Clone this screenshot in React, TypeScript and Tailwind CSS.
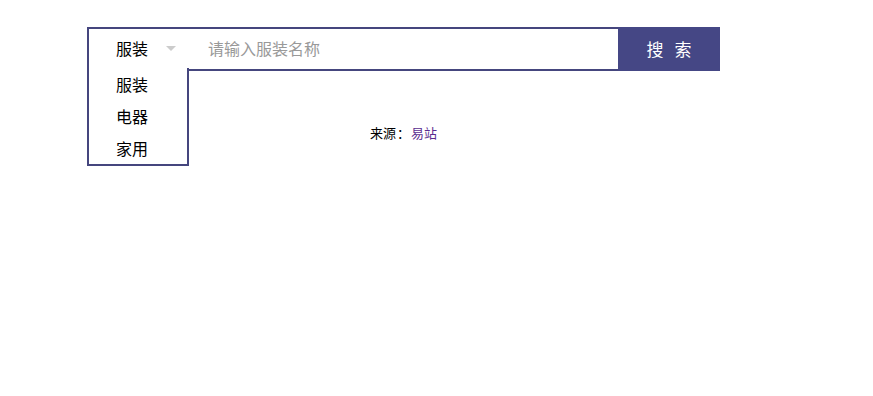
import React, { useState } from "react"

const options = ["服装", "电器", "家用"]

export default function App() {
  const [selected, setSelected] = useState("服装")
  const [keyword, setKeyword] = useState("")

  return (
    <div className="min-h-screen bg-white font-['Microsoft_YaHei','Noto_Sans_CJK_SC',sans-serif] text-black">
      <div className="ml-[87px] pt-[27px] w-[633px]">
        {/* Search bar */}
        <div className="relative flex h-[44px]">
          <div className="flex flex-1 items-center border-2 border-r-0 border-[#45467e] pb-[3px]">
            <div className="flex w-[100px] items-center pl-[27px]">
              <span className="text-[16px] leading-none">{selected}</span>
              <span className="ml-[18px] mt-[2px] h-0 w-0 border-x-[5px] border-t-[5px] border-x-transparent border-t-[#cccccc]" />
            </div>
            <input
              value={keyword}
              onChange={(e) => setKeyword(e.target.value)}
              placeholder="请输入服装名称"
              className="h-full flex-1 pl-[19px] text-[16px] outline-none placeholder:text-[#999999]"
            />
          </div>
          <button className="flex h-full w-[102px] items-center justify-center gap-[11px] bg-[#454785] text-[17px] text-white">
            <span>搜</span>
            <span>索</span>
          </button>

          {/* Dropdown list */}
          <ul className="absolute left-0 top-[41px] w-[102px] border-2 border-t-0 border-[#45467e] bg-white">
            {options.map((o) => (
              <li
                key={o}
                onClick={() => setSelected(o)}
                className="flex h-[32px] items-center pl-[27px] text-[16px] leading-none"
              >
                {o}
              </li>
            ))}
          </ul>
        </div>

        {/* Source */}
        <p className="mt-[54px] text-center text-[13px] leading-[16px]">
          来源<span className="mx-[1px]">：</span><a className="text-[#5b2c8f]">易站</a>
        </p>
      </div>
    </div>
  )
}
